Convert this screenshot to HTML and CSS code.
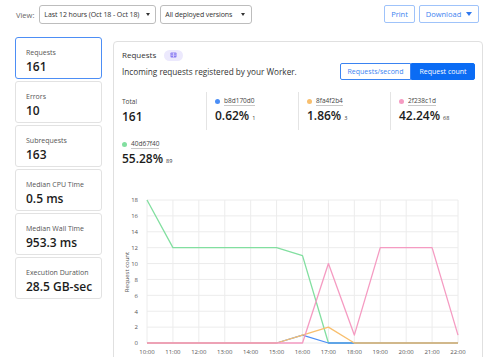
FILE: index.html
```html
<!DOCTYPE html>
<html>
<head>
<meta charset="utf-8">
<link rel="stylesheet" href="styles.css">
</head>
<body>
<div class="toolbar">
  <span class="view-label">View:</span>
  <div class="select sel-range"><span>Last 12 hours (Oct 18 - Oct 18)</span><span class="caret"></span></div>
  <div class="select sel-ver"><span>All deployed versions</span><span class="caret"></span></div>
  <div class="spacer"></div>
  <button class="btn btn-print">Print</button>
  <button class="btn btn-download">Download<span class="caret caret-blue"></span></button>
</div>
<div class="main">
  <aside class="cards">
    <div class="card active"><div class="card-label">Requests</div><div class="card-value">161</div></div>
    <div class="card"><div class="card-label">Errors</div><div class="card-value">10</div></div>
    <div class="card"><div class="card-label">Subrequests</div><div class="card-value">163</div></div>
    <div class="card"><div class="card-label">Median CPU Time</div><div class="card-value">0.5 ms</div></div>
    <div class="card"><div class="card-label">Median Wall Time</div><div class="card-value">953.3 ms</div></div>
    <div class="card"><div class="card-label">Execution Duration</div><div class="card-value">28.5 GB-sec</div></div>
  </aside>
  <section class="panel">
    <div class="panel-head">
      <div class="head-text">
        <div class="title">Requests <span class="badge"><svg width="7" height="6" viewBox="0 0 7 6"><rect x="0.5" y="0.5" width="6" height="5" rx="0.8" fill="#8b7df2"/><line x1="3.5" y1="0.8" x2="3.5" y2="5.2" stroke="#e4e0fd" stroke-width="0.8"/><line x1="1.3" y1="2" x2="2.8" y2="2" stroke="#e4e0fd" stroke-width="0.6"/><line x1="4.2" y1="2" x2="5.7" y2="2" stroke="#e4e0fd" stroke-width="0.6"/><line x1="1.3" y1="3.5" x2="2.8" y2="3.5" stroke="#e4e0fd" stroke-width="0.6"/><line x1="4.2" y1="3.5" x2="5.7" y2="3.5" stroke="#e4e0fd" stroke-width="0.6"/></svg></span></div>
        <div class="desc">Incoming requests registered by your Worker.</div>
      </div>
      <div class="toggle"><button class="tog">Requests/second</button><button class="tog on">Request count</button></div>
    </div>
    <div class="stats">
      <div class="stat"><div class="stat-label">Total</div><div class="stat-value">161</div></div>
      <div class="stat sep"><div class="stat-label"><i class="dot d-blue"></i><span class="ver">b8d170d0</span></div><div class="stat-value">0.62%<small>1</small></div></div>
      <div class="stat sep"><div class="stat-label"><i class="dot d-orange"></i><span class="ver">8fa4f2b4</span></div><div class="stat-value">1.86%<small>3</small></div></div>
      <div class="stat sep"><div class="stat-label"><i class="dot d-pink"></i><span class="ver">2f238c1d</span></div><div class="stat-value">42.24%<small>68</small></div></div>
      <div class="stat"><div class="stat-label"><i class="dot d-green"></i><span class="ver">40d67f40</span></div><div class="stat-value">55.28%<small>89</small></div></div>
    </div>
    <svg class="chart" width="368" height="180" viewBox="0 0 368 180">
      <g stroke="#ececec" stroke-width="1">
        <line x1="33" y1="20" x2="344" y2="20"/>
        <line x1="33" y1="35.89" x2="344" y2="35.89"/>
        <line x1="33" y1="51.78" x2="344" y2="51.78"/>
        <line x1="33" y1="67.67" x2="344" y2="67.67"/>
        <line x1="33" y1="83.56" x2="344" y2="83.56"/>
        <line x1="33" y1="99.44" x2="344" y2="99.44"/>
        <line x1="33" y1="115.33" x2="344" y2="115.33"/>
        <line x1="33" y1="131.22" x2="344" y2="131.22"/>
        <line x1="33" y1="147.11" x2="344" y2="147.11"/>
        <line x1="33" y1="163" x2="344" y2="163"/>
        <line x1="33" y1="20" x2="33" y2="163"/>
        <line x1="58.92" y1="20" x2="58.92" y2="163"/>
        <line x1="84.83" y1="20" x2="84.83" y2="163"/>
        <line x1="110.75" y1="20" x2="110.75" y2="163"/>
        <line x1="136.67" y1="20" x2="136.67" y2="163"/>
        <line x1="162.58" y1="20" x2="162.58" y2="163"/>
        <line x1="188.5" y1="20" x2="188.5" y2="163"/>
        <line x1="214.42" y1="20" x2="214.42" y2="163"/>
        <line x1="240.33" y1="20" x2="240.33" y2="163"/>
        <line x1="266.25" y1="20" x2="266.25" y2="163"/>
        <line x1="292.17" y1="20" x2="292.17" y2="163"/>
        <line x1="318.08" y1="20" x2="318.08" y2="163"/>
        <line x1="344" y1="20" x2="344" y2="163"/>
      </g>
      <g class="ylab" text-anchor="end">
        <text x="24" y="22.3">18</text>
        <text x="24" y="38.2">16</text>
        <text x="24" y="54.1">14</text>
        <text x="24" y="70">12</text>
        <text x="24" y="85.9">10</text>
        <text x="24" y="101.7">8</text>
        <text x="24" y="117.6">6</text>
        <text x="24" y="133.5">4</text>
        <text x="24" y="149.4">2</text>
        <text x="24" y="165.3">0</text>
      </g>
      <g class="xlab" text-anchor="middle">
        <text x="33" y="173.5">10:00</text>
        <text x="58.92" y="173.5">11:00</text>
        <text x="84.83" y="173.5">12:00</text>
        <text x="110.75" y="173.5">13:00</text>
        <text x="136.67" y="173.5">14:00</text>
        <text x="162.58" y="173.5">15:00</text>
        <text x="188.5" y="173.5">16:00</text>
        <text x="214.42" y="173.5">17:00</text>
        <text x="240.33" y="173.5">18:00</text>
        <text x="266.25" y="173.5">19:00</text>
        <text x="292.17" y="173.5">20:00</text>
        <text x="318.08" y="173.5">21:00</text>
        <text x="344" y="173.5">22:00</text>
      </g>
      <text class="ylab" x="13" y="94" text-anchor="middle" transform="rotate(-90 13 92)">Request count</text>
      <g fill="none" stroke-width="1.3" stroke-linejoin="round">
        <polyline stroke="#82dfa0" points="33,20 58.92,67.67 162.58,67.67 188.5,75.62 214.42,163 344,163"/>
        <polyline stroke="#4b8ef6" points="33,163 162.58,163 188.5,155.06 214.42,163 344,163"/>
        <polyline stroke="#f8bf6e" points="33,163 162.58,163 188.5,155.06 214.42,147.11 240.33,163 344,163"/>
        <polyline stroke="#f59bc2" points="33,163 188.5,163 214.42,83.56 240.33,155.06 266.25,67.67 318.08,67.67 344,155.06"/>
      </g>
    </svg>
  </section>
</div>
</body>
</html>
```
FILE: styles.css
```css
* { box-sizing: border-box; }
html, body {
  margin: 0;
  padding: 0;
  background: #ffffff;
  overflow: hidden;
}
body {
  font-family: "Open Sans", "Noto Sans", sans-serif;
  color: #222;
  width: 500px;
  height: 357px;
}
.toolbar {
  display: flex;
  align-items: center;
  padding: 5px 21px 0 16px;
  height: 24px;
}
.view-label {
  font-size: 7.5px;
  color: #666;
  margin-right: 5px;
}
.select {
  height: 19px;
  border: 1px solid #bdbdbd;
  border-radius: 3px;
  display: flex;
  align-items: center;
  justify-content: space-between;
  padding: 0 5px 0 4px;
  font-size: 7px;
  letter-spacing: -0.1px;
  white-space: nowrap;
  color: #333;
  background: #fff;
}
.sel-range { width: 117px; }
.sel-ver { width: 92px; margin-left: 4px; padding-right: 6px; }
.caret {
  display: inline-block;
  flex: none;
  width: 0;
  height: 0;
  border-left: 2.5px solid transparent;
  border-right: 2.5px solid transparent;
  border-top: 3px solid #333;
}
.spacer { flex: 1; }
.btn {
  height: 18px;
  border: 1px solid #9fc3fa;
  border-radius: 2px;
  background: #fff;
  color: #3c82f0;
  font-family: "Open Sans", sans-serif;
  font-size: 7.5px;
  padding: 0;
  display: flex;
  align-items: center;
  justify-content: center;
  margin-top: -1px;
}
.btn-print { width: 31px; }
.btn-download { width: 60px; margin-left: 4px; gap: 5px; }
.caret-blue {
  border-left: 3.5px solid transparent;
  border-right: 3.5px solid transparent;
  border-top: 4px solid #2f78ee;
}
.main {
  display: flex;
  align-items: flex-start;
  padding-left: 15px;
  margin-top: 13px;
}
.cards {
  width: 87px;
  display: flex;
  flex-direction: column;
  gap: 2px;
}
.card {
  height: 42px;
  border: 1px solid #e2e2e2;
  border-radius: 3px;
  padding: 10px 0 0 10px;
  background: #fff;
}
.card.active { border-color: #4d8ef5; }
.card-label {
  font-size: 7px;
  line-height: 10px;
  color: #555;
}
.card-value {
  font-size: 12px;
  line-height: 16px;
  font-weight: 600;
  color: #1c1c1c;
  margin-top: 1px;
}
.panel {
  width: 370px;
  height: 330px;
  margin-left: 11px;
  margin-top: 4px;
  border: 1px solid #e0e0e0;
  border-radius: 4px;
  background: #fff;
}
.panel-head {
  display: flex;
  justify-content: space-between;
  padding: 7px 7px 0 8px;
  height: 36px;
}
.title {
  font-size: 8px;
  line-height: 12px;
  color: #333;
  display: flex;
  align-items: center;
}
.badge {
  display: inline-flex;
  align-items: center;
  justify-content: center;
  width: 19px;
  height: 11px;
  border-radius: 6px;
  background: #ece9fd;
  margin-left: 8px;
}
.desc {
  font-size: 8.2px;
  line-height: 12px;
  margin-top: 5px;
  color: #333;
}
.toggle {
  display: flex;
  margin-top: 14px;
  height: 17px;
}
.tog {
  height: 17px;
  border: 1px solid #3a83f1;
  background: #fff;
  color: #3a83f1;
  font-family: "Open Sans", sans-serif;
  font-size: 7px;
  padding: 0;
}
.tog:first-child {
  width: 71px;
  border-radius: 2px 0 0 2px;
}
.tog.on {
  width: 64px;
  background: #0b6cf4;
  border-color: #0b6cf4;
  color: #fff;
  border-radius: 0 2px 2px 0;
}
.stats {
  display: grid;
  grid-template-columns: repeat(4, 1fr);
  row-gap: 5px;
  margin-top: 14px;
}
.stat {
  padding: 5px 0 5px 8px;
  height: 38px;
}
.stat.sep {
  border-left: 1px solid #e4e4e4;
}
.stat-label {
  font-size: 6.5px;
  line-height: 10px;
  color: #444;
  display: flex;
  align-items: center;
}
.dot {
  display: inline-block;
  width: 5px;
  height: 5px;
  border-radius: 50%;
  margin-right: 4px;
}
.d-blue { background: #4b8ef6; }
.d-orange { background: #f8bf6e; }
.d-pink { background: #f59bc2; }
.d-green { background: #82dfa0; }
.ver {
  border-bottom: 1px solid #c9c9c9;
  line-height: 8px;
}
.stat-value {
  font-size: 12px;
  line-height: 16px;
  font-weight: 600;
  color: #1c1c1c;
  margin-top: 2px;
}
.stat-value small {
  font-size: 5.5px;
  font-weight: 400;
  margin-left: 3px;
  color: #333;
}
.chart {
  display: block;
  margin-top: 7px;
}
.ylab, .ylab text, .xlab text {
  font-family: "Open Sans", sans-serif;
  font-size: 6px;
  fill: #555;
}
```
